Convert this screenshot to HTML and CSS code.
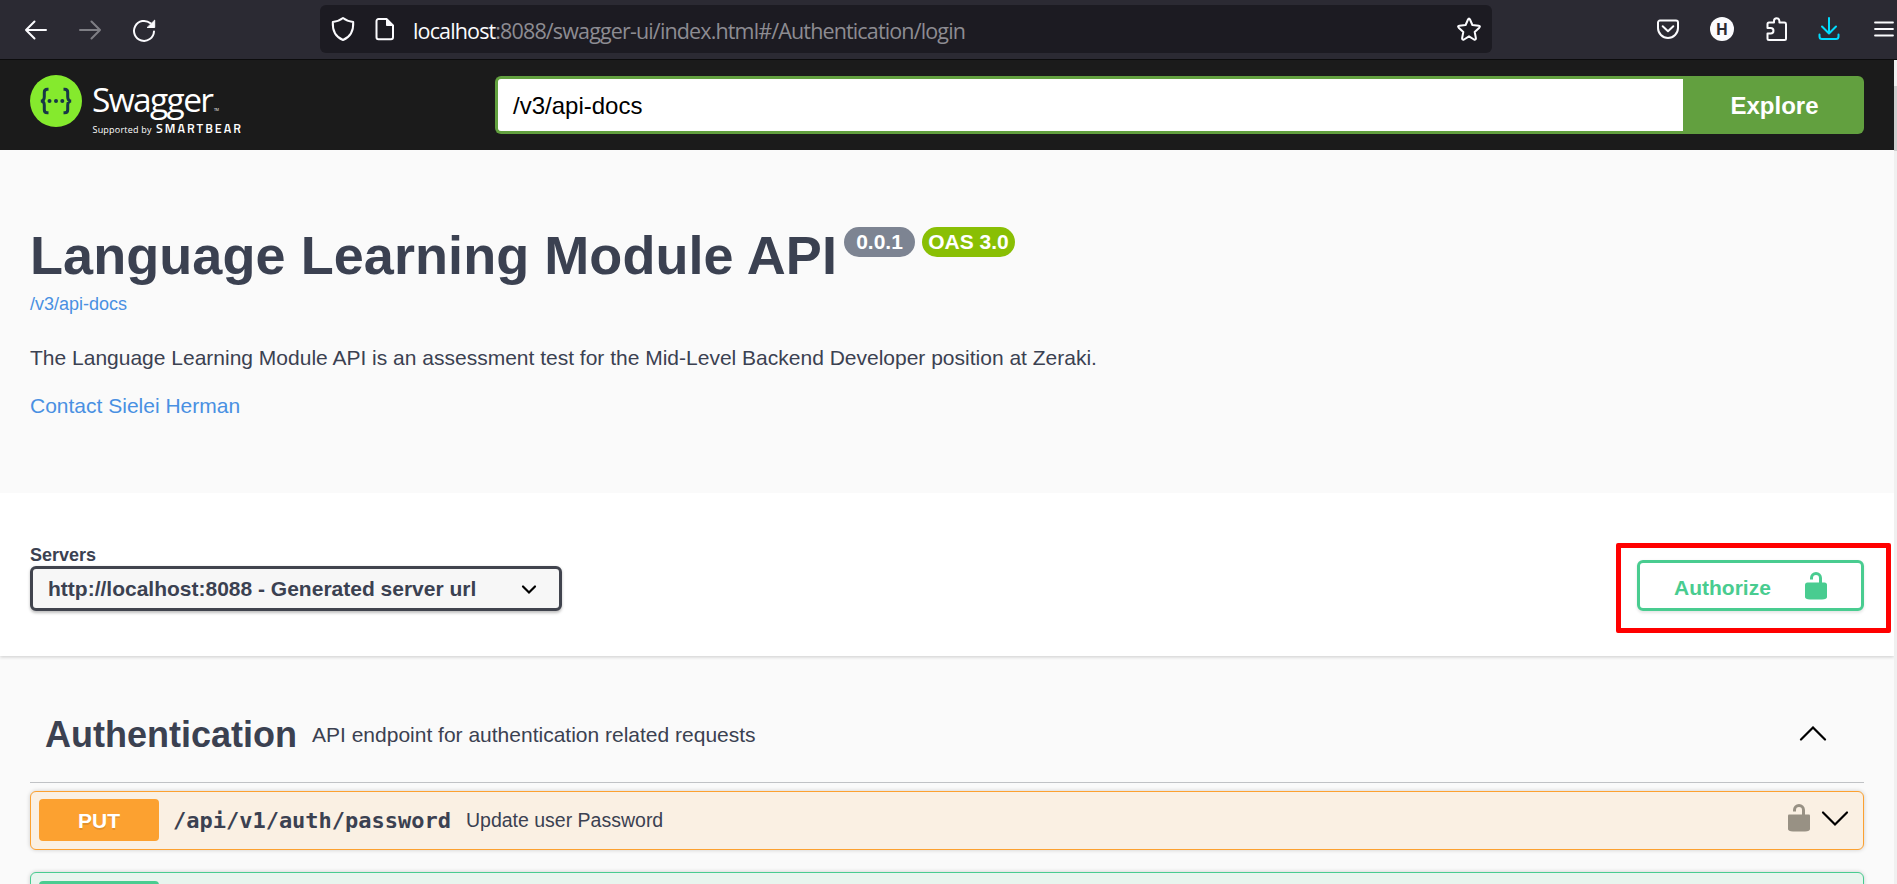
FILE: index.html
```html
<!DOCTYPE html>
<html lang="en">
<head>
<meta charset="utf-8">
<title>Swagger UI</title>
<link rel="stylesheet" href="styles.css">
</head>
<body>
<header class="browser">
  <nav class="nav-buttons">
    <svg width="24" height="24" viewBox="0 0 24 24"><path d="M22 12H2M10.500 3.500 2 12l8.500 8.500"/></svg>
    <svg class="dim" width="24" height="24" viewBox="0 0 24 24"><path d="M2 12h20M13.500 3.500 22 12l-8.500 8.500"/></svg>
    <svg width="24" height="24" viewBox="0 0 24 24"><path d="M22 13.500A10 10 0 1 1 18.500 5.300"/><path class="solid" d="M22.700 2.500v7h-7.200z"/></svg>
  </nav>
  <div class="address">
    <svg class="shield" width="24" height="26" viewBox="0 0 24 26"><path d="M12 2C9.500 4 5 5.500 1.800 6c-.4 8 2.700 15 10.200 18C19.500 21 22.600 14 22.200 6 19 5.500 14.500 4 12 2z"/></svg>
    <svg class="doc" width="20" height="24" viewBox="0 0 20 24"><path d="M3.500 2h8L18 8.500v11.800a2 2 0 0 1-2 2H3.500a2 2 0 0 1-2-2V4a2 2 0 0 1 2-2z"/><path class="solid" d="M11.500 2v6.500H18z"/></svg>
    <div class="url"><b>localhost</b>:8088/swagger-ui/index.html#/Authentication/login</div>
    <svg class="star" width="24" height="24" viewBox="0 0 24 24"><path d="M11 2.500q1-2 2 0L15.400 8l6.300.7q2 .4.600 2L17.700 15l1.200 6.200q0 2-1.900 1.300L12 19.300l-5 3.200q-1.900.7-1.900-1.300L6.300 15 1.700 10.700q-1.400-1.600.6-2L8.600 8z"/></svg>
  </div>
  <div class="extras">
    <svg class="pocket" width="24" height="24" viewBox="0 0 24 24"><path d="M4 3.500h16a2 2 0 0 1 2 2V11a10 10 0 0 1-20 0V5.500a2 2 0 0 1 2-2z"/><path d="m6.700 9.300 5.300 5 5.300-5"/></svg>
    <span class="avatar">H</span>
    <svg class="puzzle" width="24" height="26" viewBox="0 0 24 26"><path d="M2.500 12V8A1.500 1.500 0 0 1 4 6.500h5V5a2.700 2.700 0 0 1 5.400 0v1.500h5A1.600 1.600 0 0 1 21 8v14.500a1.500 1.500 0 0 1-1.500 1.500H4a1.500 1.500 0 0 1-1.500-1.500V17.500h3.200a2.750 2.750 0 0 0 0-5.500z"/></svg>
    <svg class="download" width="24" height="26" viewBox="0 0 24 26"><path d="M12 2V17M5 10.500l7 7 7-7M2.500 18.500v2A2.500 2.500 0 0 0 5 23h14a2.500 2.500 0 0 0 2.500-2.500v-2"/></svg>
    <svg class="menu" width="20" height="20" viewBox="0 0 20 20"><path d="M1 3.500h18M1 10h18M1 16.500h18"/></svg>
  </div>
</header>
<div class="viewport">
  <main class="page">
    <div class="topbar">
      <svg class="logo" width="220" height="64" viewBox="0 0 220 64">
        <circle cx="26" cy="26" r="26" fill="#85ea2d"/>
        <path class="brace" d="M18.500 14.200h-1.200q-3 0-3 3v4.500q0 4.300-3.500 4.300 3.500 0 3.500 4.300v4.500q0 3 3 3h1.200M33.500 14.200h1.200q3 0 3 3v4.500q0 4.300 3.500 4.300-3.500 0-3.500 4.300v4.500q0 3-3 3h-1.200"/>
        <g fill="#173647"><circle cx="19.500" cy="26" r="2"/><circle cx="26" cy="26" r="2"/><circle cx="32.300" cy="26" r="2"/></g>
        <text class="word" x="62" y="36.500" textLength="122">Swagger</text>
        <text class="tm" x="184" y="36" textLength="5">TM</text>
        <text class="support" x="62.500" y="57.500" textLength="59">Supported by</text>
        <text class="bear" x="126" y="57.500" textLength="85">SMARTBEAR</text>
      </svg>
      <div class="search"><div class="field">/v3/api-docs</div><div class="explore">Explore</div></div>
    </div>
    <section class="info">
      <div class="title-row"><h1>Language Learning Module API</h1><span class="badge version">0.0.1</span><span class="badge oas">OAS 3.0</span></div>
      <a class="docs">/v3/api-docs</a>
      <p class="desc">The Language Learning Module API is an assessment test for the Mid-Level Backend Developer position at Zeraki.</p>
      <a class="contact">Contact Sielei Herman</a>
    </section>
    <section class="schemes">
      <div class="servers">
        <label>Servers</label>
        <div class="select"><span>http://localhost:8088 - Generated server url</span><svg width="16" height="12" viewBox="0 0 16 12"><path d="m2 3.500 6 6 6-6"/></svg></div>
      </div>
      <div class="highlight">
        <div class="authorize"><span>Authorize</span><svg class="lock" width="22" height="28" viewBox="0 0 22 28"><path d="M2.500 10.500h17q2.500 0 2.500 2.500v12q0 2-5 2.500H5q-5-.5-5-2.500V13q0-2.500 2.500-2.500z"/><path class="shackle" d="M6.500 7.500V6a4.500 4.500 0 0 1 9 0v5"/></svg></div>
      </div>
    </section>
    <section class="tag">
      <div class="tag-head"><h2>Authentication</h2><span>API endpoint for authentication related requests</span><svg class="chev" width="28" height="18" viewBox="0 0 28 18"><path d="M2 13.500 14 1.500l12 12"/></svg></div>
      <div class="op put"><span class="method">PUT</span><code>/api/v1/auth/password</code><span class="summary">Update user Password</span><svg class="lock" width="22" height="28" viewBox="0 0 22 28"><path d="M1 10.500h20q1 0 1 1V25q0 2-5 2.500H5q-5-.5-5-2.500V11.500q0-1 1-1z"/><path class="shackle" d="M6.500 7.500V6a4.500 4.500 0 0 1 9 0v5"/></svg><svg class="chev" width="28" height="18" viewBox="0 0 28 18"><path d="m2 2.500 12 12 12-12"/></svg></div>
      <div class="op post"><span class="method"></span></div>
    </section>
  </main>
  <div class="scrollbar"><div class="thumb"></div></div>
</div>
</body>
</html>
```
FILE: styles.css
```css
* { box-sizing: border-box; }
body {
  margin: 0;
  height: 884px;
  overflow: hidden;
  font-family: "Liberation Sans", Arial, sans-serif;
  color: #3b4151;
  background: #fafafa;
}
h1, h2, p { margin: 0; }
svg { display: block; flex: none; fill: none; }

/* browser toolbar */
.browser {
  display: flex;
  height: 60px;
  background: #2b2a33;
  border-bottom: 1px solid #0c0c0d;
}
.browser svg { stroke: #fbfbfe; stroke-width: 2; stroke-linecap: round; stroke-linejoin: round; }
.browser .solid { fill: #fbfbfe; stroke-width: 1; }
.nav-buttons { display: flex; gap: 30px; width: 320px; padding: 18px 0 0 24px; }
.nav-buttons .dim { opacity: .4; }
.address {
  display: flex;
  align-items: center;
  width: 1172px;
  height: 48px;
  margin-top: 5px;
  padding: 0 11px;
  border-radius: 6px;
  background: #1c1b22;
}
.address .doc { margin-left: 20px; }
.url {
  flex: 1;
  margin-left: 18px;
  padding-top: 2px;
  font: 21.500px "Open Sans", sans-serif;
  letter-spacing: -0.860px;
  white-space: nowrap;
  color: #8d8c92;
}
.url b { font-weight: 400; color: #fbfbfe; }
.extras { display: flex; align-items: center; height: 58px; margin-left: 164px; }
.avatar {
  width: 24px;
  height: 24px;
  margin: 0 31px 0 30px;
  border-radius: 50%;
  background: #fbfbfe;
  color: #2b2a33;
  font: bold 16px/25px Roboto, sans-serif;
  text-align: center;
}
.browser .download { margin-left: 28px; stroke: #00ddff; }
.browser .menu { margin-left: 33px; stroke-width: 1.800; }

/* page and scrollbar */
.viewport { display: flex; height: 824px; }
.page { flex: 1; min-width: 0; overflow: hidden; }
.scrollbar { width: 3px; padding-top: 26px; background: #f0f0f0; }
.thumb { height: 65px; background: #cdcdcd; }

.topbar {
  display: flex;
  justify-content: space-between;
  height: 90px;
  padding: 15px 30px 0;
  background: #1b1b1b;
}
.logo { overflow: visible; }
.brace { stroke: #173647; stroke-width: 3; }
.logo text { fill: #fff; font-family: "Open Sans", sans-serif; }
.logo .word { font-size: 33.500px; font-weight: 400; }
.logo .tm { font-size: 3.500px; }
.logo .support { font-size: 9px; }
.logo .bear { font: 600 12.500px "Titillium Web", "Open Sans", sans-serif; }
.search { display: flex; width: 1369px; height: 58px; margin-top: 1px; }
.field {
  flex: 1;
  padding-left: 15px;
  border: 3px solid #62a03f;
  border-right: 0;
  border-radius: 6px 0 0 6px;
  background: #fff;
  color: #000;
  font-size: 24px;
  line-height: 53px;
}
.explore {
  width: 181px;
  padding-left: 2px;
  border-radius: 0 6px 6px 0;
  background: #62a03f;
  color: #fff;
  font-size: 24px;
  font-weight: bold;
  line-height: 59px;
  text-align: center;
}

.info { height: 343px; padding: 76px 30px 0; }
.title-row { display: flex; height: 67px; }
h1 { font-size: 54px; line-height: 58px; letter-spacing: 0.070px; white-space: nowrap; }
.badge {
  height: 30px;
  margin-top: 1px;
  border-radius: 15px;
  color: #fff;
  font-size: 21px;
  font-weight: bold;
  line-height: 30px;
  text-align: center;
}
.version { width: 71px; margin-left: 7px; background: #7d8492; }
.oas { width: 93px; margin-left: 7px; background: #89bf04; }
a { display: block; color: #4990e2; }
.docs { font-size: 18px; line-height: 22px; }
.desc { margin-top: 31px; font-size: 21px; line-height: 24px; }
.contact { margin-top: 24px; font-size: 21px; line-height: 24px; }

.schemes {
  display: flex;
  justify-content: space-between;
  height: 163px;
  padding: 50px 3px 0 30px;
  background: #fff;
  box-shadow: 0 1.500px 3px rgba(0, 0, 0, .15);
  position: relative;
}
.servers label { display: block; height: 23px; font-size: 18px; font-weight: bold; line-height: 25px; }
.select {
  display: flex;
  align-items: center;
  justify-content: space-between;
  width: 532px;
  height: 45px;
  padding: 0 22px 0 15px;
  border: 3px solid #41444e;
  border-radius: 6px;
  background: #f7f7f7;
  box-shadow: 0 1.500px 3px rgba(0, 0, 0, .25);
  font-size: 21px;
  font-weight: bold;
}
.select path { stroke: #000; stroke-width: 2.200; stroke-linecap: round; }
.highlight {
  width: 275px;
  height: 90px;
  padding: 12px 16px;
  border: 5px solid #f00;
  border-radius: 2px;
}
.authorize {
  display: flex;
  align-items: center;
  justify-content: space-between;
  width: 227px;
  height: 51px;
  padding: 0 34px;
  border: 3px solid #49cc90;
  border-radius: 6px;
  box-shadow: 0 1.500px 3px rgba(0, 0, 0, .1);
  color: #49cc90;
  font-size: 21px;
  font-weight: bold;
}
.authorize span { padding-top: 4px; }
.lock path { fill: currentColor; }
.lock .shackle { fill: none; stroke: currentColor; stroke-width: 3; }

.tag { padding: 0 30px; }
.tag-head {
  display: flex;
  align-items: center;
  height: 127px;
  padding: 31px 37px 0 15px;
  border-bottom: 1px solid #c0c2c5;
}
h2 { font-size: 36px; line-height: 42px; }
.tag-head span { flex: 1; margin-left: 15px; font-size: 21px; }
.chev path { stroke: #000; stroke-width: 2.200; stroke-linecap: round; }
.op {
  display: flex;
  align-items: center;
  height: 59px;
  margin-top: 8px;
  padding: 0 14px 1px 8px;
  border: 1px solid;
  border-radius: 6px;
  box-shadow: 0 0 4px rgba(0, 0, 0, .19);
}
.put { border-color: #fca130; background: #faf0e3; }
.post { margin-top: 22px; padding-bottom: 0; border-color: #49cc90; background: #e8f5ee; }
.method {
  width: 120px;
  height: 42px;
  border-radius: 4px;
  color: #fff;
  font-size: 21px;
  font-weight: bold;
  line-height: 43px;
  text-align: center;
  text-shadow: 0 1.500px 0 rgba(0, 0, 0, .1);
}
.put .method { background: #fca130; }
.post .method { background: #49cc90; }
.op code { margin-left: 14px; padding-top: 1px; font: bold 22px "DejaVu Sans Mono", monospace; letter-spacing: -0.010px; }
.summary { flex: 1; margin-left: 15px; padding-top: 1px; font-size: 19.500px; letter-spacing: 0; }
.op .lock { margin-top: -4px; color: #989184; }
.op .chev { margin: -2px 0 0 11px; }
```
